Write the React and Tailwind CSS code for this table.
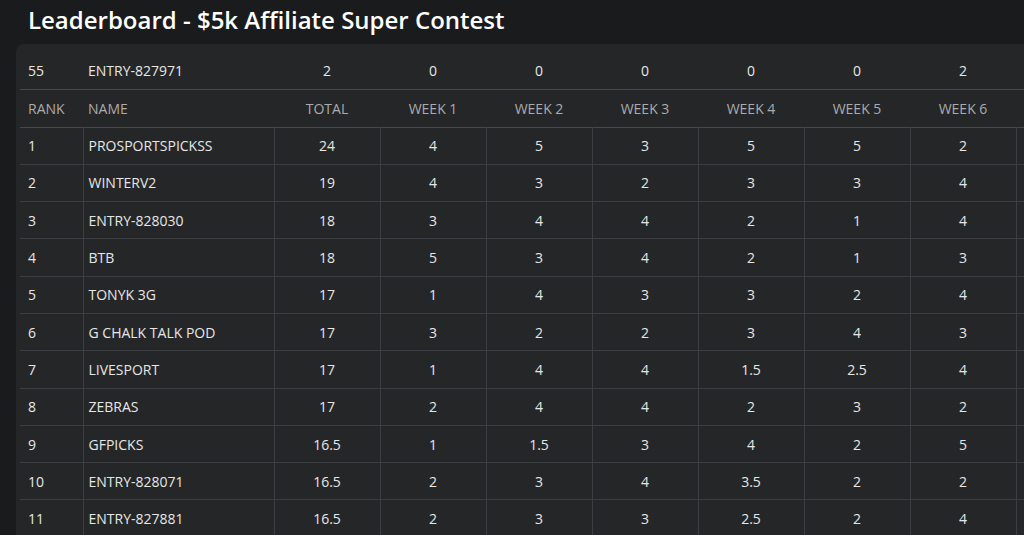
import React from "react";

const rows = [
  [1, "PROSPORTSPICKSS", "24", "4", "5", "3", "5", "5", "2"],
  [2, "WINTERV2", "19", "4", "3", "2", "3", "3", "4"],
  [3, "ENTRY-828030", "18", "3", "4", "4", "2", "1", "4"],
  [4, "BTB", "18", "5", "3", "4", "2", "1", "3"],
  [5, "TONYK 3G", "17", "1", "4", "3", "3", "2", "4"],
  [6, "G CHALK TALK POD", "17", "3", "2", "2", "3", "4", "3"],
  [7, "LIVESPORT", "17", "1", "4", "4", "1.5", "2.5", "4"],
  [8, "ZEBRAS", "17", "2", "4", "4", "2", "3", "2"],
  [9, "GFPICKS", "16.5", "1", "1.5", "3", "4", "2", "5"],
  [10, "ENTRY-828071", "16.5", "2", "3", "4", "3.5", "2", "2"],
  [11, "ENTRY-827881", "16.5", "2", "3", "3", "2.5", "2", "4"],
];

const weeks = ["WEEK 1", "WEEK 2", "WEEK 3", "WEEK 4", "WEEK 5", "WEEK 6"];

export default function App() {
  return (
    <div
      className="w-[1024px] h-[535px] overflow-hidden bg-[#1a1b1d] text-[#e6e6e6]"
      style={{ fontFamily: '"Open Sans", "Noto Sans", sans-serif' }}
    >
      <div className="h-[44px] pl-[28px] pt-[4px] text-[24px] leading-[32px] font-semibold text-white whitespace-nowrap">
        Leaderboard - $5k Affiliate Super Contest
      </div>
      <div className="ml-[16px] w-[1110px] rounded-t-[8px] bg-[#252628] pl-[4px] pt-[8px] h-[600px]">
        <table className="w-[1102px] table-fixed border-collapse text-[14px]">
          <colgroup>
            <col className="w-[63px]" />
            <col className="w-[191px]" />
            <col className="w-[106px]" />
            {weeks.map((w) => (
              <col key={w} className="w-[106px]" />
            ))}
            <col className="w-[106px]" />
          </colgroup>
          <thead>
            <tr className="h-[37px] border-b border-[#47484b]">
              <td className="pl-[8px] text-left">55</td>
              <td className="pl-[5px] text-left">ENTRY-827971</td>
              <td className="text-center">2</td>
              <td className="text-center">0</td>
              <td className="text-center">0</td>
              <td className="text-center">0</td>
              <td className="text-center">0</td>
              <td className="text-center">0</td>
              <td className="text-center">2</td>
              <td></td>
            </tr>
            <tr className="h-[38px] border-b border-[#47484b] text-[#ababab]">
              <th className="pl-[8px] text-left font-normal">RANK</th>
              <th className="pl-[5px] text-left font-normal">NAME</th>
              <th className="text-center font-normal">TOTAL</th>
              {weeks.map((w) => (
                <th key={w} className="text-center font-normal">
                  {w}
                </th>
              ))}
              <th></th>
            </tr>
          </thead>
          <tbody>
            {rows.map((r) => (
              <tr key={r[0]} className="h-[37.3px] border-b border-[#3d3e41]">
                <td className="pl-[8px] text-left">{r[0]}</td>
                <td className="pl-[5px] text-left border-l border-[#3d3e41]">{r[1]}</td>
                {r.slice(2).map((v, i) => (
                  <td key={i} className="text-center border-l border-[#3d3e41]">
                    {v}
                  </td>
                ))}
                <td className="border-l border-[#3d3e41]"></td>
              </tr>
            ))}
          </tbody>
        </table>
      </div>
    </div>
  );
}
